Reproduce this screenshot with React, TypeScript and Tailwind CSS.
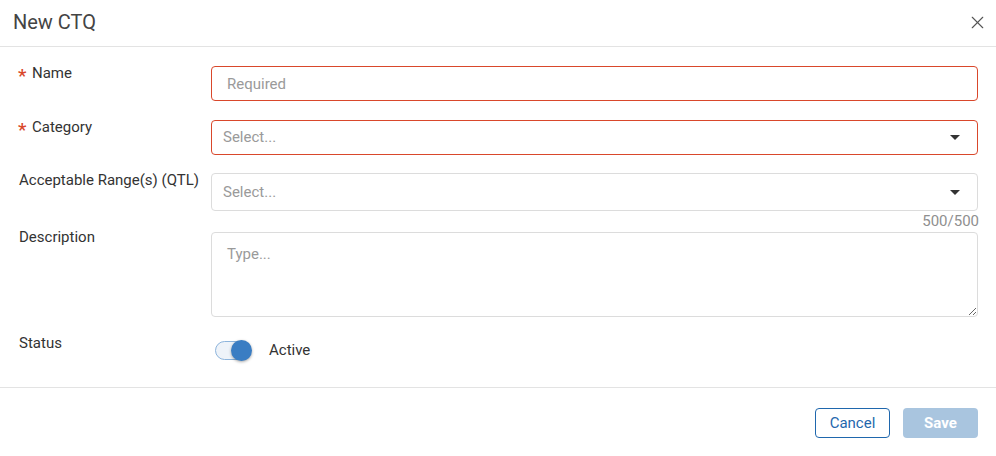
import { X } from "lucide-react";

function Label({ text, required, className = "" }: { text: string; required?: boolean; className?: string }) {
  return (
    <div className={`w-[192px] shrink-0 flex items-start text-[15px] leading-[18px] text-[#333] ${className}`}>
      {required && (
        <span className="w-[14px] -ml-[1px] text-[#d9472b] text-[19px] leading-[24px] font-medium h-[18px]">*</span>
      )}
      <span>{text}</span>
    </div>
  );
}

function Caret() {
  return (
    <svg width="10" height="5" viewBox="0 0 10 5" className="shrink-0">
      <path d="M0 0h10L5 5z" fill="#333" />
    </svg>
  );
}

function SelectBox({ invalid }: { invalid?: boolean }) {
  return (
    <div
      className={`flex-1 flex items-center justify-between pl-[11px] pr-[17px] rounded-[4px] border ${
        invalid ? "border-[#d9472b] h-[35px]" : "border-[#dcdcdc] h-[38px]"
      }`}
    >
      <span className="text-[15px] text-[#9a9a9a]">Select...</span>
      <Caret />
    </div>
  );
}

export default function App() {
  return (
    <div className="w-[996px] h-[456px] bg-white font-['Roboto',sans-serif] flex flex-col">
      {/* header */}
      <div className="h-[47px] shrink-0 border-b border-[#e3e3e3] flex items-center justify-between pl-[13px] pr-[8px]">
        <h2 className="text-[20px] text-[#444] pb-[2px]">New CTQ</h2>
        <X className="w-[21px] h-[21px] text-[#555] mb-[2px]" strokeWidth={1.3} />
      </div>

      {/* form */}
      <div className="flex-1 flex flex-col pl-[19px] pr-[18px] pt-[19px]">
        <div className="flex items-start">
          <Label text="Name" required className="-mt-[2px]" />
          <input
            placeholder="Required"
            className="flex-1 h-[35px] rounded-[4px] border border-[#d9472b] px-[15px] text-[15px] text-[#333] placeholder:text-[#9a9a9a] outline-none"
          />
        </div>

        <div className="flex items-start mt-[19px]">
          <Label text="Category" required className="-mt-[2px]" />
          <SelectBox invalid />
        </div>

        <div className="flex items-start mt-[18px]">
          <Label text="Acceptable Range(s) (QTL)" className="-mt-[2px]" />
          <SelectBox />
        </div>

        <div className="text-right text-[15px] leading-[21px] text-[#8f8f8f] -mr-[1px]">500/500</div>

        <div className="flex items-start">
          <Label text="Description" className="-mt-[4px]" />
          <textarea
            placeholder="Type..."
            className="flex-1 h-[85px] rounded-[4px] border border-[#dcdcdc] px-[15px] py-[10px] text-[15px] text-[#333] placeholder:text-[#9a9a9a] outline-none resize-y"
          />
        </div>

        <div className="flex items-start mt-[22px]">
          <Label text="Status" className="-mt-[5px]" />
          <div className="flex items-center h-[22px] pl-[4px]">
            <div className="relative w-[36px] h-[19px] rounded-full bg-[#eef3f9] border border-[#8db4dc]">
              <div className="absolute right-[-2px] top-[-2px] w-[21px] h-[21px] rounded-full bg-[#3a7dc3] shadow-[0_1px_3px_rgba(0,0,0,0.35)]" />
            </div>
            <span className="ml-[18px] text-[15px] text-[#333]">Active</span>
          </div>
        </div>
      </div>

      {/* footer */}
      <div className="h-[69px] shrink-0 border-t border-[#e3e3e3] flex items-start justify-end gap-[13px] pr-[18px] pt-[20px]">
        <button className="w-[75px] h-[30px] rounded-[4px] border border-[#1f67ad] text-[#1f67ad] text-[15px]">
          Cancel
        </button>
        <button className="w-[75px] h-[30px] rounded-[4px] bg-[#a9c5df] text-white text-[15px] font-bold">
          Save
        </button>
      </div>
    </div>
  );
}
